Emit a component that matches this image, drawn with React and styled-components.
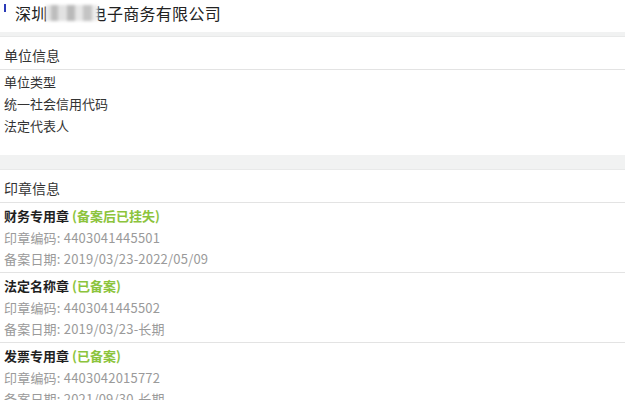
import React from "react";
import styled, { createGlobalStyle } from "styled-components";

const GlobalStyle = createGlobalStyle`
  body {
    margin: 0;
    background: #fff;
    font-family: "Noto Sans CJK SC", "Noto Sans", sans-serif;
    color: #333;
  }
`;

const units = ["单位类型", "统一社会信用代码", "法定代表人"];

const seals = [
  { name: "财务专用章", status: "(备案后已挂失)", code: "4403041445501", date: "2019/03/23-2022/05/09" },
  { name: "法定名称章", status: "(已备案)", code: "4403041445502", date: "2019/03/23-长期" },
  { name: "发票专用章", status: "(已备案)", code: "4403042015772", date: "2021/09/30-长期" },
];

const App = () => {
  return (
    <Page>
      <GlobalStyle />
      <Header>
        <Mark />
        <Title>
          深圳
          <Mask />
          电子商务有限公司
        </Title>
      </Header>
      <Band $h={4} />
      <SectionTitle>单位信息</SectionTitle>
      <UnitList>
        {units.map((u) => (
          <UnitRow key={u}>{u}</UnitRow>
        ))}
      </UnitList>
      <Band $h={14} />
      <SectionTitle>印章信息</SectionTitle>
      {seals.map((s) => (
        <Seal key={s.code}>
          <SealName>
            {s.name} <Status>{s.status}</Status>
          </SealName>
          <SealLine>印章编码: {s.code}</SealLine>
          <SealLine>备案日期: {s.date}</SealLine>
        </Seal>
      ))}
    </Page>
  );
};

export default App;

const Page = styled.div`
  width: 625px;
  height: 400px;
  overflow: hidden;
`;

const Header = styled.div`
  height: 32px;
  display: flex;
  align-items: flex-start;
  padding-left: 4px;
  box-sizing: border-box;
`;

const Mark = styled.div`
  width: 2px;
  height: 8px;
  margin-top: 4px;
  background: #2b3bb8;
`;

const Title = styled.div`
  margin-left: 9px;
  font-size: 16px;
  line-height: 26px;
  letter-spacing: 0.3px;
  color: #222;
  display: flex;
  align-items: center;
`;

const Mask = styled.span`
  display: inline-block;
  width: 52px;
  height: 16px;
  margin-left: -2px;
  margin-right: -7px;
  position: relative;
  z-index: 1;
  background: linear-gradient(
    90deg,
    #e4e4e4 0 10%,
    #bdbdbd 10% 24%,
    #e2e2e2 24% 40%,
    #b9b9b9 40% 55%,
    #e6e6e6 55% 72%,
    #c4c4c4 72% 88%,
    #ececec 88%
  );
  filter: blur(1.5px);
`;

const Band = styled.div`
  height: ${(p) => p.$h}px;
  background: #f1f2f2;
  border-bottom: 1px solid #e8e9e9;
`;

const SectionTitle = styled.div`
  height: 32px;
  line-height: 36px;
  padding-left: 4px;
  font-size: 14px;
  color: #333;
  border-bottom: 1px solid #e3e3e3;
`;

const UnitList = styled.div`
  padding: 1px 0 18px 4px;
`;

const UnitRow = styled.div`
  font-size: 13px;
  line-height: 22px;
  color: #333;
`;

const Seal = styled.div`
  padding: 1px 0 3px 4px;
  border-bottom: 1px solid #e3e3e3;
`;

const SealName = styled.div`
  font-size: 13px;
  line-height: 23px;
  font-weight: bold;
  color: #1f1f1f;
`;

const Status = styled.span`
  color: #8cc43c;
  font-weight: bold;
`;

const SealLine = styled.div`
  font-size: 13px;
  line-height: 21px;
  letter-spacing: 0.2px;
  color: #9a9a9a;
`;
